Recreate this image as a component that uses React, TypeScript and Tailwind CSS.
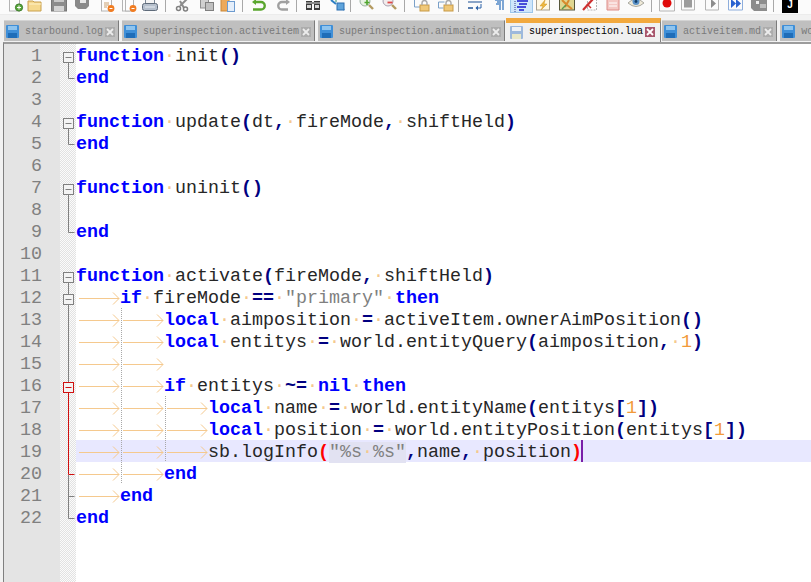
import type { ReactNode } from "react"

type Kind = "k" | "t" | "o" | "s" | "n" | "r"
type Token = [Kind, string]
type Fold = "open" | "openMid" | "openRed" | "line" | "red" | "redTick" | "tick" | "end"

const mono = "font-['Liberation_Mono',monospace]"

const kindClass: Record<Kind, string> = {
  k: "font-bold text-[#0000ff]",
  t: "text-[#262626]",
  o: "font-bold text-[#000080]",
  s: "text-[#808080]",
  n: "text-[#f29a3a]",
  r: "font-bold text-[#ff0000]",
}

const lines: { tabs: number; tokens: Token[]; fold?: Fold; active?: boolean }[] = [
  { tabs: 0, fold: "open", tokens: [["k", "function"], ["t", " init"], ["o", "()"]] },
  { tabs: 0, fold: "end", tokens: [["k", "end"]] },
  { tabs: 0, tokens: [] },
  { tabs: 0, fold: "open", tokens: [["k", "function"], ["t", " update"], ["o", "("], ["t", "dt"], ["o", ","], ["t", " fireMode"], ["o", ","], ["t", " shiftHeld"], ["o", ")"]] },
  { tabs: 0, fold: "end", tokens: [["k", "end"]] },
  { tabs: 0, tokens: [] },
  { tabs: 0, fold: "open", tokens: [["k", "function"], ["t", " uninit"], ["o", "()"]] },
  { tabs: 0, fold: "line", tokens: [] },
  { tabs: 0, fold: "end", tokens: [["k", "end"]] },
  { tabs: 0, tokens: [] },
  { tabs: 0, fold: "open", tokens: [["k", "function"], ["t", " activate"], ["o", "("], ["t", "fireMode"], ["o", ","], ["t", " shiftHeld"], ["o", ")"]] },
  { tabs: 1, fold: "openMid", tokens: [["k", "if"], ["t", " fireMode "], ["o", "=="], ["t", " "], ["s", "\"primary\""], ["t", " "], ["k", "then"]] },
  { tabs: 2, fold: "line", tokens: [["k", "local"], ["t", " aimposition "], ["o", "="], ["t", " activeItem.ownerAimPosition"], ["o", "()"]] },
  { tabs: 2, fold: "line", tokens: [["k", "local"], ["t", " entitys "], ["o", "="], ["t", " world.entityQuery"], ["o", "("], ["t", "aimposition"], ["o", ","], ["t", " "], ["n", "1"], ["o", ")"]] },
  { tabs: 2, fold: "line", tokens: [] },
  { tabs: 2, fold: "openRed", tokens: [["k", "if"], ["t", " entitys "], ["o", "~="], ["t", " "], ["k", "nil"], ["t", " "], ["k", "then"]] },
  { tabs: 3, fold: "red", tokens: [["k", "local"], ["t", " name "], ["o", "="], ["t", " world.entityName"], ["o", "("], ["t", "entitys"], ["o", "["], ["n", "1"], ["o", "])"]] },
  { tabs: 3, fold: "red", tokens: [["k", "local"], ["t", " position "], ["o", "="], ["t", " world.entityPosition"], ["o", "("], ["t", "entitys"], ["o", "["], ["n", "1"], ["o", "])"]] },
  { tabs: 3, fold: "red", active: true, tokens: [["t", "sb.logInfo"], ["r", "("], ["s", "\"%s %s\""], ["o", ","], ["t", "name"], ["o", ","], ["t", " position"], ["r", ")"]] },
  { tabs: 2, fold: "redTick", tokens: [["k", "end"]] },
  { tabs: 1, fold: "tick", tokens: [["k", "end"]] },
  { tabs: 0, fold: "end", tokens: [["k", "end"]] },
]

const Ico = ({ className, children }: { className: string; children: ReactNode }) => (
  <svg width="16" height="14" viewBox="0 0 16 14" className={`flex-none ${className}`}>
    {children}
  </svg>
)

const Sep = ({ className }: { className: string }) => (
  <div className={`w-px h-[12px] flex-none bg-[#a8a8a8] ${className}`} />
)

const Doc = ({ x = 2, w = 10 }: { x?: number; w?: number }) => (
  <rect x={x + 0.5} y="-2" width={w} height="13" fill="#fdfdfd" stroke="#b4b4b4" />
)

const Toolbar = () => (
  <div className="flex items-start h-[14px] pl-0 bg-[#fbfbfb] overflow-hidden">
    <Ico className="ml-[8px]">
      <Doc x={1} />
      <circle cx="11" cy="7.5" r="3.6" fill="#5aa83c" stroke="#3c7d2a" />
      <path d="M11 5.5v4M9 7.5h4" stroke="#fff" />
    </Ico>
    <Ico className="ml-[3px]">
      <path d="M1 1h5l1 1h7v9H1z" fill="#f6d98e" stroke="#c9a04e" />
      <path d="M2 4h12" stroke="#fff2c8" />
    </Ico>
    <Ico className="ml-[8px]">
      <rect x="0.5" y="-2" width="15" height="13" fill="#8c8c8c" stroke="#777" />
      <rect x="3" y="6" width="10" height="5" fill="#d4d4d4" />
      <rect x="3" y="-1" width="10" height="3" fill="#c8c8c8" />
    </Ico>
    <Ico className="ml-[7px]">
      <path d="M1 -2h14v8l-3 3H4L1 6z" fill="#8a8a8a" />
      <rect x="6" y="0" width="6" height="3" fill="#e8e8e8" />
    </Ico>
    <Ico className="ml-[10px]">
      <Doc x={1} />
      <path d="M4 3h5M4 5h5M4 7h3" stroke="#c8a070" />
      <circle cx="11" cy="8.5" r="3.4" fill="#f07c22" />
      <path d="M9.5 8.5h3" stroke="#fff" />
    </Ico>
    <Ico className="ml-[6px]">
      <Doc x={0} w={7} />
      <Doc x={3} w={8} />
      <circle cx="11" cy="8.5" r="3.4" fill="#f07c22" />
      <path d="M9.5 8.5h3" stroke="#fff" />
    </Ico>
    <Ico className="ml-[4px]">
      <rect x="3.5" y="-2" width="9" height="6" fill="#f4f4f4" stroke="#7a8796" />
      <rect x="0.5" y="3.5" width="15" height="7" rx="2" fill="#b5bfcc" stroke="#5f6b7a" />
      <path d="M3 7h10" stroke="#e8edf3" />
    </Ico>
    <Sep className="ml-[7px]" />
    <Ico className="ml-[8px]">
      <path d="M13 -1L6 6M10 8L6 1" stroke="#8c8c8c" strokeWidth="2" fill="none" />
      <circle cx="4.5" cy="8.5" r="2" fill="none" stroke="#808080" strokeWidth="1.5" />
      <circle cx="11.5" cy="9" r="2" fill="none" stroke="#808080" strokeWidth="1.5" />
    </Ico>
    <Ico className="ml-[9px]">
      <rect x="1.5" y="-2" width="8" height="10" fill="#d0d0d0" stroke="#909090" />
      <rect x="6.5" y="2.5" width="8" height="8" fill="#c0c0c0" stroke="#808080" />
    </Ico>
    <Ico className="ml-[5px]">
      <rect x="1" y="-2" width="8" height="13" fill="#eda95a" stroke="#c98839" />
      <rect x="7.5" y="1.5" width="7" height="10" fill="#e4eefa" stroke="#6d9bcf" />
    </Ico>
    <Sep className="ml-[6px]" />
    <Ico className="ml-[7px]">
      <path d="M5 2h6a3.2 3.2 0 0 1 0 7.5H3" fill="none" stroke="#5aa62e" strokeWidth="2.4" />
      <path d="M6 -1L2 2l4 3z" fill="#5aa62e" />
    </Ico>
    <Ico className="ml-[10px]">
      <path d="M11 2H6a3.2 3.2 0 0 0 0 7.5h6" fill="none" stroke="#a0a0a0" strokeWidth="2.4" />
      <path d="M10 -1l4 3-4 3z" fill="#a0a0a0" />
    </Ico>
    <Sep className="ml-[4px]" />
    <Ico className="ml-[8px]">
      <rect x="1" y="1" width="6" height="9" fill="#3c3c3c" />
      <rect x="9" y="1" width="6" height="9" fill="#3c3c3c" />
      <rect x="1" y="2" width="14" height="2" fill="#8c8c8c" />
      <rect x="2" y="5" width="4" height="3" fill="#d8d8d8" />
      <rect x="10" y="5" width="4" height="3" fill="#d8d8d8" />
    </Ico>
    <Ico className="ml-[9px]">
      <path d="M1 0l5 4M10 5l4 5" stroke="#2d7fc4" strokeWidth="2" />
      <rect x="7" y="3" width="7" height="7" fill="#5fa4dc" stroke="#2d6fb0" />
      <path d="M3 -1h3v3" stroke="#2d8f6a" fill="none" />
    </Ico>
    <Sep className="ml-[4px]" />
    <Ico className="ml-[8px]">
      <circle cx="6" cy="1" r="5" fill="#e8f2e4" stroke="#9ab0a0" />
      <path d="M10 5l4 4" stroke="#b49a60" strokeWidth="2.4" />
      <path d="M8 0v5M5.5 2.5h5" stroke="#4fa52d" strokeWidth="1.6" />
    </Ico>
    <Ico className="ml-[7px]">
      <circle cx="6" cy="1" r="5" fill="#f2ecec" stroke="#a8a0b0" />
      <path d="M10 5l4 4" stroke="#b49a60" strokeWidth="2.4" />
      <path d="M5.5 2.5h5" stroke="#e04848" strokeWidth="1.8" />
    </Ico>
    <Sep className="ml-[6px]" />
    <Ico className="ml-[9px]">
      <path d="M0.5 -2v9h6" fill="none" stroke="#7aa0c8" />
      <rect x="6" y="5" width="9" height="6" fill="#f0c878" stroke="#c79a46" />
      <path d="M8 5V3a2.5 2.5 0 0 1 5 0v2" fill="none" stroke="#a8a8a8" strokeWidth="1.4" />
    </Ico>
    <Ico className="ml-[8px]">
      <path d="M0.5 2h6M0.5 2v6h5" fill="none" stroke="#7aa0c8" />
      <rect x="6" y="5" width="9" height="6" fill="#f0c878" stroke="#c79a46" />
      <path d="M8 5V3a2.5 2.5 0 0 1 5 0v2" fill="none" stroke="#a8a8a8" strokeWidth="1.4" />
    </Ico>
    <Sep className="ml-[4px]" />
    <Ico className="ml-[8px]">
      <path d="M1 2h14" stroke="#5a7fb0" strokeWidth="1.4" />
      <path d="M1 8h5" stroke="#5a7fb0" strokeWidth="2" />
      <path d="M14 4v4H9" fill="none" stroke="#2d62a8" />
      <path d="M11 5.5L8.5 8l2.5 2.5z" fill="#2d62a8" />
    </Ico>
    <Ico className="ml-[7px]">
      <path d="M5 0h9M10 0v10M13 0v10" stroke="#7da6d4" strokeWidth="2" />
      <path d="M8 0v4H6" stroke="#7da6d4" strokeWidth="2" fill="none" />
    </Ico>
    <div className="ml-[4px] w-[23px] h-[13px] flex-none flex justify-center bg-[#cfe6fa] border-b border-x border-[#9cc6ea]">
      <svg width="16" height="13" viewBox="0 0 16 13">
        <path d="M1 -1v13" stroke="#3a3a8a" strokeDasharray="1 1" />
        <path d="M3 1h11M5 4h8M3 7h9M5 10h5" stroke="#1a1ad0" strokeWidth="1.6" />
      </svg>
    </div>
    <Ico className="ml-[2px]">
      <rect x="1.5" y="-3" width="13" height="13" fill="#fff8e4" stroke="#a8a090" />
      <path d="M10 0L5 6h3L6 10l6-6H9z" fill="#eeb83e" stroke="#cf9426" strokeWidth="0.5" />
    </Ico>
    <Ico className="ml-[8px]">
      <rect x="0.5" y="-2" width="15" height="12" fill="#dfd690" stroke="#55553a" />
      <path d="M3 0l5 5 5 4M10 0L6 7" stroke="#d88a2c" strokeWidth="2" fill="none" />
      <path d="M3 9l4-4" stroke="#5a9a4c" strokeWidth="1.5" />
    </Ico>
    <Ico className="ml-[7px]">
      <rect x="5.5" y="-1" width="9" height="11" fill="#fff" stroke="#b4b4b4" strokeDasharray="2 1" />
      <path d="M1 10L11 -1" stroke="#cc2f2f" strokeWidth="2.2" />
      <path d="M5 4l4 4" stroke="#cc2f2f" strokeWidth="1.5" />
    </Ico>
    <Ico className="ml-[7px]">
      <path d="M2 -2h12v12H2z" fill="#f4c8c4" stroke="#dc8c88" />
      <path d="M4 3h8M4 6h8" stroke="#fff" />
    </Ico>
    <Ico className="ml-[7px]">
      <path d="M0 3q8-8 16 0q-8 7-16 0z" fill="#f0ead8" stroke="#a8a8a0" />
      <circle cx="8" cy="1.5" r="3.5" fill="#5b92c8" />
      <circle cx="8" cy="1.5" r="1.4" fill="#123c66" />
    </Ico>
    <Sep className="ml-[7px]" />
    <Ico className="ml-[7px]">
      <path d="M0.5 -2v13h15V-2" fill="#fbfbfb" stroke="#b4b4b4" />
      <circle cx="8" cy="3" r="4.5" fill="#e00a0a" />
    </Ico>
    <Ico className="ml-[6px]">
      <path d="M0.5 -2v12h13V-2" fill="#fbfbfb" stroke="#b4b4b4" />
      <rect x="3" y="-1" width="8" height="8.5" fill="#9c9c9c" />
    </Ico>
    <Ico className="ml-[8px]">
      <path d="M0.5 -2v12h13V-2" fill="#fbfbfb" stroke="#b4b4b4" />
      <path d="M6 -1l5 4.5L6 8z" fill="#8c8c8c" />
    </Ico>
    <Ico className="ml-[7px]">
      <path d="M0.5 -2v12h14V-2" fill="#fbfbfb" stroke="#8eaedc" />
      <path d="M3 -1l5 4.5L3 8zM8 -1l5 4.5L8 8z" fill="#2a62d0" />
    </Ico>
    <Ico className="ml-[7px]">
      <path d="M0 -2h16v13H3L0 8z" fill="#8c8c8c" />
      <rect x="5" y="1" width="3" height="3" fill="#eee" />
      <path d="M9 5h6M9 7h6" stroke="#eee" />
    </Ico>
    <Sep className="ml-[6px]" />
    <div className="ml-[8px] w-[16px] h-[13px] flex-none bg-black flex justify-center items-start">
      <span className="text-white text-[10px] leading-[10px] font-['Liberation_Sans',sans-serif] font-bold">J</span>
    </div>
  </div>
)

const Floppy = ({ active }: { active?: boolean }) => (
  <svg width="13" height="13" viewBox="0 0 13 13" className="flex-none">
    <rect width="13" height="13" rx="1" fill={active ? "#9db9dc" : "#3f8fd8"} />
    <rect x="2" y="1" width="9" height="4" fill={active ? "#eef2f7" : "#8fc4ee"} />
    <rect x="2" y="8" width="9" height="5" fill={active ? "#e8e8c8" : "#1f6db8"} />
  </svg>
)

const Tab = ({ label, active, className }: { label: string; active?: boolean; className: string }) => (
  <div
    className={`flex-none flex items-center ${className} ${
      active
        ? "self-start h-[24px] pb-px pl-[4px] pr-[5px] bg-[#f0f0f0] border-t-[5px] border-[#f2a93e] box-border border-r border-r-[#808080]"
        : "h-[21px] pt-px pl-[2px] pr-[3px] bg-[#bfbfbf] border-r border-r-[#7c7c7c] border-t border-t-[#d4d4d4]"
    }`}
  >
    <Floppy active={active} />
    <span className={`ml-[6px] text-[10px] leading-[12px] whitespace-pre ${mono} ${active ? "text-black" : "text-[#7a7a7a]"}`}>
      {label}
    </span>
    <svg width="10" height="10" viewBox="0 0 10 10" className="flex-none ml-[2px]">
      <rect width="10" height="10" fill={active ? "#a8566c" : "#acacac"} />
      <path d="M2 2l6 6M8 2l-6 6" stroke={active ? "#fff" : "#ececec"} strokeWidth="1.8" />
    </svg>
  </div>
)

const FoldMark = ({ kind }: { kind?: Fold }) => {
  const gray = "#808080"
  const red = "#d01010"
  return (
    <svg width="16" height="22" viewBox="0 0 16 22" className="block">
      {(kind === "open" || kind === "openMid") && (
        <>
          {kind === "openMid" && <path d="M8.5 0v8" stroke={gray} />}
          <path d="M8.5 18v4" stroke={gray} />
          <rect x="3.5" y="8.5" width="10" height="10" fill="#f4f4f4" stroke={gray} />
          <path d="M5.5 13.5h6" stroke={gray} />
        </>
      )}
      {kind === "openRed" && (
        <>
          <path d="M8.5 0v8" stroke={gray} />
          <path d="M8.5 18v4" stroke={red} />
          <rect x="3.5" y="8.5" width="10" height="10" fill="#f4f4f4" stroke={red} />
          <path d="M5.5 13.5h6" stroke={red} />
        </>
      )}
      {kind === "line" && <path d="M8.5 0v22" stroke={gray} />}
      {kind === "red" && <path d="M8.5 0v22" stroke={red} />}
      {kind === "redTick" && (
        <>
          <path d="M8.5 0v12.5M8.5 12.5h6" stroke={red} fill="none" />
          <path d="M8.5 13v9" stroke={gray} />
        </>
      )}
      {kind === "tick" && <path d="M8.5 0v22M8.5 12.5h6" stroke={gray} />}
      {kind === "end" && <path d="M8.5 0v12.5h6" stroke={gray} fill="none" />}
    </svg>
  )
}

const TabArrow = ({ guide }: { guide: boolean }) => (
  <svg width="44" height="22" viewBox="0 0 44 22" className="flex-none">
    {guide && <path d="M0.5 0v22" stroke="#a8a8a8" strokeDasharray="1 1" />}
    <path d="M2 12.5h40M36 6.5l6 6-6 6" fill="none" stroke="#f5c98e" />
  </svg>
)

const Code = ({ tokens }: { tokens: Token[] }) => (
  <>
    {tokens.map(([kind, text], i) => (
      <span key={i} className={`${kindClass[kind]} ${text === '"%s %s"' ? "bg-[#e2e2f2]" : ""}`}>
        {text.split(/( )/).map((part, j) =>
          part === " " ? (
            <span key={j} className="font-normal text-[#f5c98e]">·</span>
          ) : (
            part
          ),
        )}
      </span>
    ))}
  </>
)

export default function App() {
  return (
    <div className="w-[811px] h-[582px] flex flex-col bg-white overflow-hidden">
      <Toolbar />
      <div className="flex items-start h-[28px] pt-[3px] pl-[4px] bg-[#f2f2f2] border-t border-[#ececec] overflow-hidden box-border">
        <Tab label="starbound.log" className="mt-[2px]" />
        <Tab label="superinspection.activeitem" className="mt-[2px] ml-[3px]" />
        <Tab label="superinspection.animation" className="mt-[2px] ml-[3px]" />
        <Tab label="superinspection.lua" active className="ml-[1px]" />
        <Tab label="activeitem.md" className="mt-[2px] ml-[1px]" />
        <Tab label="wo" className="mt-[2px] ml-[3px]" />
      </div>
      <div className="flex-1 flex bg-[#f2f2f2] pl-[3px] overflow-hidden">
        <div className="flex-1 flex border-t-2 border-l border-[#9c9c9c] border-l-[#808080] bg-white">
          <div className={`w-[56px] flex-none bg-[#e4e4e4] pr-[18px] text-right text-[18.33px] leading-[26px] text-[#808080] ${mono}`}>
            {lines.map((_, i) => (
              <div key={i} className="h-[22px]">{i + 1}</div>
            ))}
          </div>
          <div className="w-[16px] flex-none bg-[repeating-conic-gradient(#e2e2e2_0_25%,#fbfbfb_0_50%)] bg-[length:2px_2px]">
            {lines.map((line, i) => (
              <FoldMark key={i} kind={line.fold} />
            ))}
          </div>
          <div className={`flex-1 text-[18.33px] leading-[26px] whitespace-pre ${mono}`}>
            {lines.map((line, i) => (
              <div key={i} className={`flex h-[22px] pl-px ${line.active ? "bg-[#e8e8ff]" : ""}`}>
                {Array.from({ length: line.tabs }, (_, t) => (
                  <TabArrow key={t} guide={t > 0} />
                ))}
                <div className="-ml-px">
                  <Code tokens={line.tokens} />
                  {line.active && <span className="inline-block align-top w-[2px] h-[22px] -ml-[1px] bg-[#7a1fa8]" />}
                </div>
              </div>
            ))}
          </div>
        </div>
      </div>
    </div>
  )
}
